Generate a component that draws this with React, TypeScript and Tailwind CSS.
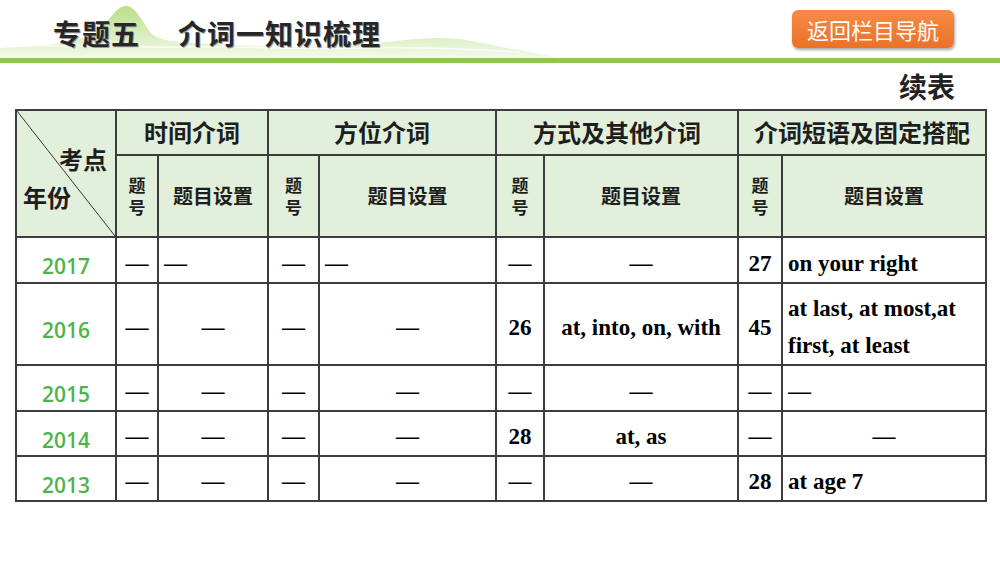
import type { ReactNode } from "react";

const cjk = "font-['Noto_Sans_CJK_SC',sans-serif]";
const serif = "font-['Liberation_Serif','Noto_Sans_CJK_SC',serif]";

type Cell = { text: ReactNode; align?: "left" | "center" };

const D = "—";

const rows: { year: string; h: string; cells: Cell[] }[] = [
  {
    year: "2017",
    h: "h-[46px]",
    cells: [
      { text: D },
      { text: D, align: "left" },
      { text: D },
      { text: D, align: "left" },
      { text: D },
      { text: D },
      { text: "27" },
      { text: "on your right", align: "left" },
    ],
  },
  {
    year: "2016",
    h: "h-[82px]",
    cells: [
      { text: D },
      { text: D },
      { text: D },
      { text: D },
      { text: "26" },
      { text: "at, into, on, with" },
      { text: "45" },
      {
        text: (
          <>
            at last, at most,at
            <br />
            first, at least
          </>
        ),
        align: "left",
      },
    ],
  },
  {
    year: "2015",
    h: "h-[46px]",
    cells: [
      { text: D },
      { text: D },
      { text: D },
      { text: D },
      { text: D },
      { text: D },
      { text: D },
      { text: D, align: "left" },
    ],
  },
  {
    year: "2014",
    h: "h-[45px]",
    cells: [
      { text: D },
      { text: D },
      { text: D },
      { text: D },
      { text: "28" },
      { text: "at, as" },
      { text: D },
      { text: D },
    ],
  },
  {
    year: "2013",
    h: "h-[45px]",
    cells: [
      { text: D },
      { text: D },
      { text: D },
      { text: D },
      { text: D },
      { text: D },
      { text: "28" },
      { text: "at age 7", align: "left" },
    ],
  },
];

const groups = ["时间介词", "方位介词", "方式及其他介词", "介词短语及固定搭配"];

function Mountains() {
  return (
    <svg className="absolute inset-0" width="1000" height="58" viewBox="0 0 1000 58">
      <defs>
        <linearGradient id="hill" x1="0" y1="0" x2="0" y2="1">
          <stop offset="0" stopColor="#b9de86" />
          <stop offset="0.6" stopColor="#dcefc4" />
          <stop offset="1" stopColor="#f4faec" />
        </linearGradient>
        <linearGradient id="fade" x1="0" y1="0" x2="1" y2="0">
          <stop offset="0" stopColor="#fff" stopOpacity="0" />
          <stop offset="0.55" stopColor="#fff" stopOpacity="0" />
          <stop offset="0.72" stopColor="#fff" stopOpacity="1" />
        </linearGradient>
      </defs>
      <path
        d="M0 48 C40 46 80 44 100 30 C112 16 118 6 126 6 C136 6 142 22 152 34 C165 44 190 42 210 44 C250 46 300 48 340 46 C380 44 410 38 440 38 C470 38 490 46 520 50 L560 58 L0 58 Z"
        fill="url(#hill)"
      />
      <path
        d="M0 46 C60 44 120 48 180 47 C240 46 300 50 360 48 C420 46 470 50 520 52"
        fill="none"
        stroke="#ffffff"
        strokeWidth="1.5"
        opacity="0.8"
      />
      <rect x="0" y="0" width="1000" height="58" fill="url(#fade)" />
    </svg>
  );
}

export default function App() {
  return (
    <div className="w-[1000px] h-[563px] bg-white overflow-hidden">
      <header className="relative h-[58px] flex items-start">
        <Mountains />
        <h1
          className={`relative pl-[53px] pt-[17px] text-[28px] leading-[32px] font-bold text-[#262626] tracking-[1px] [text-shadow:1px_1px_0_#9a9a9a] ${cjk}`}
        >
          专题五<span className="ml-[38px]">介词一知识梳理</span>
        </h1>
        <button
          className={`relative ml-auto mr-[46px] mt-[10px] w-[162px] h-[38px] rounded-[6px] bg-gradient-to-b from-[#f68b45] to-[#ec7127] text-white text-[22px] leading-none shadow-[1px_2px_3px_rgba(0,0,0,0.35)] ${cjk}`}
        >
          返回栏目导航
        </button>
      </header>
      <div className="h-[5px] bg-[#8dc556]" />

      <div className="h-[46px] flex items-center justify-end pr-[45px]">
        <span className={`text-[28px] font-bold text-[#222] ${cjk}`}>续表</span>
      </div>

      <table className="ml-[15px] w-[970px] table-fixed border-collapse">
        <colgroup>
          <col className="w-[100px]" />
          <col className="w-[42px]" />
          <col className="w-[110px]" />
          <col className="w-[51px]" />
          <col className="w-[177px]" />
          <col className="w-[48px]" />
          <col className="w-[194px]" />
          <col className="w-[44px]" />
          <col className="w-[204px]" />
        </colgroup>
        <thead className={`bg-[#e2efda] text-[#1e1e1e] ${cjk}`}>
          <tr className="h-[44px]">
            <th rowSpan={2} className="relative border-2 border-[#3d3d3d] p-0 font-normal">
              <svg className="absolute inset-0" width="100%" height="100%" preserveAspectRatio="none" viewBox="0 0 100 127">
                <line x1="0" y1="0" x2="100" y2="127" stroke="#333" strokeWidth="1" />
              </svg>
              <div className="relative flex flex-col h-[125px] pt-[34px] text-[24px] leading-[28px] font-bold">
                <span className="self-end pr-[8px]">考点</span>
                <span className="self-start pl-[6px] mt-[10px]">年份</span>
              </div>
            </th>
            {groups.map((g) => (
              <th key={g} colSpan={2} className="border-2 border-[#3d3d3d] text-[24px] font-bold leading-none">
                {g}
              </th>
            ))}
          </tr>
          <tr className="h-[81px]">
            {groups.map((g) => (
              <>
                <th key={g + "n"} className="border-2 border-[#3d3d3d] text-[17px] leading-[22px] font-bold p-0">
                  题<br />号
                </th>
                <th key={g + "s"} className="border-2 border-[#3d3d3d] text-[20px] font-bold">
                  题目设置
                </th>
              </>
            ))}
          </tr>
        </thead>
        <tbody>
          {rows.map((r) => (
            <tr key={r.year} className={r.h}>
              <td className="border-2 border-[#3d3d3d] text-center align-middle pt-[12px] text-[21px] leading-[26px] font-semibold text-[#4cb54a] font-['Open_Sans',sans-serif]">
                {r.year}
              </td>
              {r.cells.map((c, i) => (
                <td
                  key={i}
                  className={`border-2 border-[#3d3d3d] pt-[6px] text-[23px] leading-[37px] font-bold text-black ${serif} ${
                    c.align === "left" ? "text-left pl-[5px]" : "text-center"
                  }`}
                >
                  {c.text}
                </td>
              ))}
            </tr>
          ))}
        </tbody>
      </table>
    </div>
  );
}
